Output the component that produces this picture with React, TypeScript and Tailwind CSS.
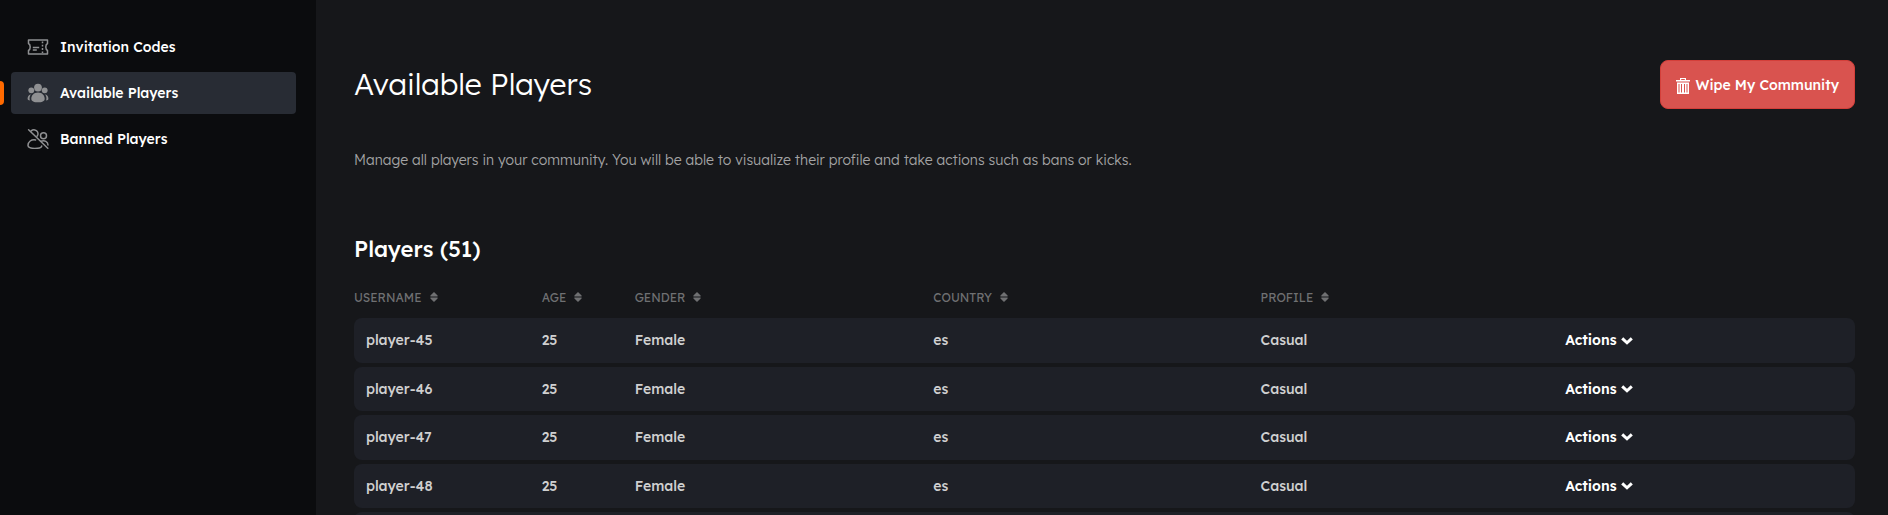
import type { ReactNode } from 'react';

function TicketIcon() {
  return (
    <svg viewBox="0 0 22 16" className="w-[22px] h-4" fill="none" stroke="currentColor" strokeWidth="1.5" aria-hidden="true">
      <path d="M1.500 1h19v3.500c-1.300.7-1.700 2-1.700 3.500s.4 2.800 1.700 3.500V15h-19v-3.500c1.300-.7 1.700-2 1.700-3.500s-.4-2.800-1.700-3.500z" strokeLinejoin="round" />
      <path d="M15.500 2.500v11.500" strokeDasharray="1.800 1.500" />
      <path d="M5.800 8.600h6.400M5.800 11h4" />
    </svg>
  );
}

function GroupIcon() {
  return (
    <svg viewBox="0 0 22 20" className="w-[22px] h-5" fill="currentColor" aria-hidden="true">
      <circle cx="11" cy="4.600" r="3.900" />
      <circle cx="4.300" cy="7.300" r="2.900" />
      <circle cx="17.700" cy="7.300" r="2.900" />
      <path d="M11 9.400c4.200 0 6.700 3 6.700 6.300 0 2.600-3 3.600-6.700 3.600s-6.700-1-6.700-3.600c0-3.300 2.500-6.300 6.700-6.300z" />
      <path d="M3.900 11.200c-2.300.6-3.400 2.700-3.300 4.700.1.800.9 1.300 2.300 1.500-.7-2.200-.3-4.400 1-6.200zM18.100 11.200c2.300.6 3.400 2.700 3.300 4.700-.1.800-.9 1.300-2.300 1.500.7-2.200.3-4.400-1-6.200z" />
    </svg>
  );
}

function BannedIcon() {
  return (
    <svg viewBox="0 0 22 20" className="w-[22px] h-5" fill="none" stroke="currentColor" strokeWidth="1.500" strokeLinecap="round" aria-hidden="true">
      <path d="M1.600.8 20.800 19.200" />
      <path d="M4.200 1.900c1-.9 2.300-1.200 3.600-1 2.300.5 3.600 2.700 3 4.900-.2.600-.4 1.100-.8 1.500" />
      <path d="M8.600 10.900c-4.500-.8-7.400 2-7.600 5.400-.1 2 2.700 3.100 6.700 3.100s6.800-.8 7-2.300" />
      <circle cx="16.500" cy="6.800" r="3" />
      <path d="M14 12.300c3.700-1.300 6.900.4 7 3.700" />
    </svg>
  );
}

function TrashIcon() {
  return (
    <svg viewBox="0 0 14 16" className="w-[14px] h-4" aria-hidden="true">
      <path fill="currentColor" fillRule="evenodd" d="M4 0h6v2h4v1.500H0V2h4zm1.200 1.100V2h3.600v-.9zM1 4.500h12V16H1zM2.500 6v8.500h1V6zM5 6v8.500h1V6zM8 6v8.500h1V6zM10.500 6v8.500h1V6z" />
    </svg>
  );
}

function SortIcon() {
  return (
    <svg viewBox="0 0 8 10" className="w-2 h-[10px]" fill="currentColor" aria-hidden="true">
      <path d="M4 0 7.600 3.600v.8H.4v-.8zM4 10 .4 6.400v-.8h7.200v.8z" />
    </svg>
  );
}

function ChevronIcon() {
  return (
    <svg viewBox="0 0 12 8" className="w-3 h-2" fill="none" stroke="currentColor" strokeWidth="3" aria-hidden="true">
      <path d="M1.200 1.400 6 5.800l4.800-4.400" />
    </svg>
  );
}

function NavItem({ icon, label, active = false }: { icon: ReactNode; label: string; active?: boolean }) {
  return (
    <li className="relative pl-[11px] pr-5">
      {active && <span className="absolute left-0 top-[9px] h-6 w-1 rounded-r-sm bg-[#ff6a00]" />}
      <a
        href="#"
        aria-current={active ? 'page' : undefined}
        className={
          active
            ? 'flex h-[42px] items-center gap-[11px] rounded bg-[#282c34] px-4 text-white'
            : 'flex h-[42px] items-center gap-[11px] rounded px-4 text-white'
        }
      >
        <span className="text-[#8f9092]">{icon}</span>
        {label}
      </a>
    </li>
  );
}

const columns = [
  { label: 'Username', width: 'w-[12.5%]' },
  { label: 'Age', width: 'w-[6.2%]' },
  { label: 'Gender', width: 'w-[19.9%]' },
  { label: 'Country', width: 'w-[21.8%]' },
  { label: 'Profile', width: 'w-[20.3%]' },
];

const players = [45, 46, 47, 48, 49].map((n) => ({
  username: `player-${n}`,
  age: 25,
  gender: 'Female',
  country: 'es',
  profile: 'Casual',
}));

export default function App() {
  return (
    <div className="flex min-h-screen bg-[#16171a] font-['Lexend','Inter',sans-serif] text-[14px] leading-[1.6] text-white">
      <aside className="w-[316px] shrink-0 bg-[#0b0c0e] pt-[26px]">
        <nav>
          <ul className="flex flex-col gap-1 font-medium">
            <NavItem icon={<TicketIcon />} label="Invitation Codes" />
            <NavItem icon={<GroupIcon />} label="Available Players" active />
            <NavItem icon={<BannedIcon />} label="Banned Players" />
          </ul>
        </nav>
      </aside>

      <main className="min-w-0 flex-1 pl-[38px] pr-[33px] pt-[60px]">
        <header className="flex items-start justify-between">
          <h1 className="text-[30px] leading-[48px] font-light">Available Players</h1>
          <button
            type="button"
            className="flex h-[49px] items-center gap-[5px] rounded-lg border border-[#d43f3a] bg-[#d9534f] px-[15px] pt-0.5 font-medium"
          >
            <TrashIcon />
            Wipe My Community
          </button>
        </header>

        <p className="mt-10 font-light text-[#a3a3a4]">
          Manage all players in your community. You will be able to visualize their profile and take actions such as
          bans or kicks.
        </p>

        <h2 className="mt-[62px] text-[22px] leading-8 font-medium">Players (51)</h2>

        <table className="mt-[11px] w-full table-fixed border-separate border-spacing-x-0 border-spacing-y-1 text-left">
          <thead>
            <tr className="h-[34px] text-[12px] text-[#6f7072] uppercase">
              {columns.map((column) => (
                <th key={column.label} scope="col" className={`${column.width} p-0 font-normal`}>
                  <button type="button" className="flex items-center gap-2 uppercase">
                    {column.label}
                    <SortIcon />
                  </button>
                </th>
              ))}
              <td className="p-0" />
            </tr>
          </thead>
          <tbody>
            {players.map((player) => (
              <tr key={player.username} className="font-medium text-[#cfcfd0] *:bg-[#1e2027] *:py-[11px]">
                <td className="rounded-l-lg pl-3">{player.username}</td>
                <td>{player.age}</td>
                <td>{player.gender}</td>
                <td>{player.country}</td>
                <td>{player.profile}</td>
                <td className="rounded-r-lg">
                  <button type="button" className="flex items-center gap-1 font-semibold text-white">
                    Actions
                    <ChevronIcon />
                  </button>
                </td>
              </tr>
            ))}
          </tbody>
        </table>
      </main>
    </div>
  );
}
